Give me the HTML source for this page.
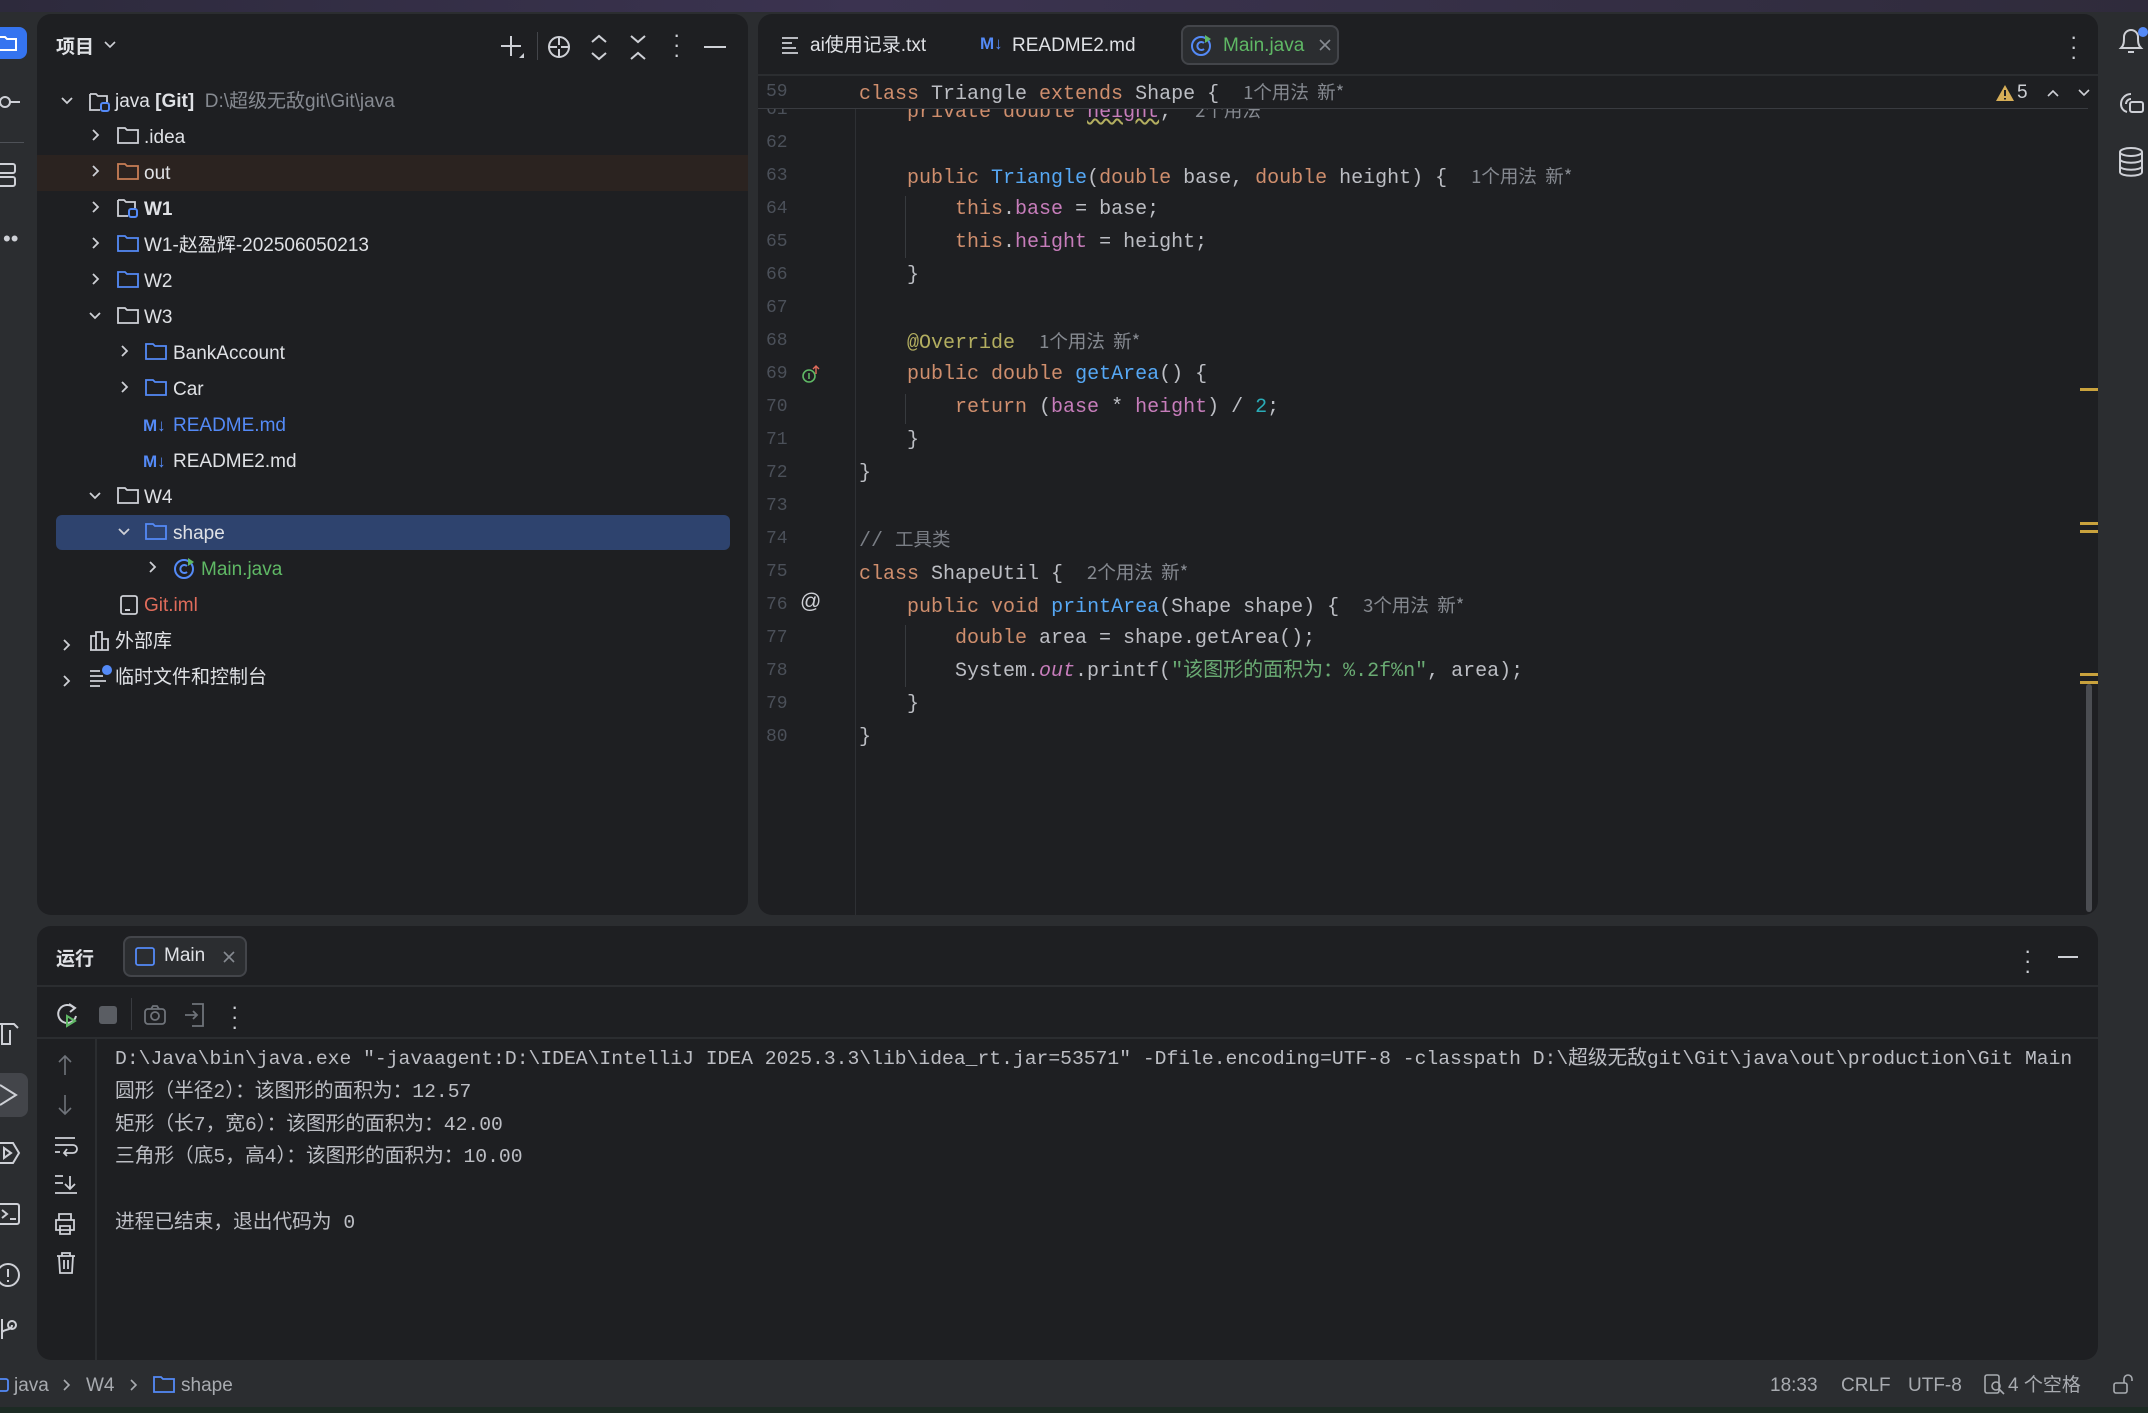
<!DOCTYPE html>
<html><head><meta charset="utf-8">
<style>
*{margin:0;padding:0;box-sizing:border-box}
body{width:2148px;height:1413px;background:#2b2d30;position:relative;overflow:hidden;font-family:"Liberation Sans","Noto Sans CJK SC",sans-serif;color:#dfe1e5}
.a{position:absolute;white-space:pre}
.panel{position:absolute;background:#1e1f22;border-radius:14px;overflow:hidden}
.t{position:absolute;font-size:19px;line-height:36px;height:36px;white-space:pre}
.mono{font-family:"Liberation Mono","Noto Sans CJK SC",monospace;font-size:19.7px}
.cl{position:absolute;left:0;height:33px;line-height:33px;white-space:pre;font-family:"Liberation Mono","Noto Sans CJK SC",monospace;font-size:20px;color:#bcbec4}
.ln{position:absolute;left:8px;width:30px;text-align:left;color:#4b5059;font-family:"Liberation Mono",monospace;font-size:18px;height:33px;line-height:33px}
.k{color:#cf8e6d}.f{color:#56a8f5}.v{color:#c77dbb}.n{color:#2aacb8}.s{color:#6aab73}.an{color:#b3ae60}.c{color:#7a7e85}
.h{color:#868a91;font-family:"Noto Sans CJK SC",sans-serif;font-size:18.5px}
svg{position:absolute;overflow:visible}
</style></head><body>
<div class="a" style="left:0;top:0;width:2148px;height:12px;background:linear-gradient(90deg,#2d2a3c,#3b3350 40%,#2f2b3b)"></div>
<div class="a" style="left:0;top:1407px;width:2148px;height:6px;background:#1d2b24"></div>

<div class="a" style="left:0;top:27px;width:27px;height:32px;background:#3574f0;border-radius:0 8px 8px 0"></div>
<svg style="left:0;top:34px" width="24" height="20"><path d="M-2 3h7l2 2h9v11h-18" fill="none" stroke="#fff" stroke-width="2"/></svg>
<svg style="left:0;top:92px" width="24" height="20"><circle cx="5" cy="10" r="5" fill="none" stroke="#ced0d6" stroke-width="2"/><path d="M10 10h10" stroke="#ced0d6" stroke-width="2"/></svg>
<div class="a" style="left:0;top:142px;width:24px;height:1px;background:#4e5157"></div>
<svg style="left:0;top:163px" width="20" height="26"><rect x="-3" y="1" width="18" height="9" rx="2" fill="none" stroke="#ced0d6" stroke-width="2"/><rect x="-3" y="14" width="18" height="9" rx="2" fill="none" stroke="#ced0d6" stroke-width="2"/></svg>
<div class="a" style="left:3px;top:226px;font-size:22px;color:#ced0d6">••</div>
<svg style="left:0;top:1020px" width="22" height="26"><path d="M-2 4h16l4 4M2 4v20h8v-14" fill="none" stroke="#ced0d6" stroke-width="2"/></svg>
<div class="a" style="left:0;top:1073px;width:28px;height:44px;background:#43454a;border-radius:0 8px 8px 0"></div>
<svg style="left:0;top:1083px" width="22" height="24"><path d="M0 2l16 10-16 10" fill="none" stroke="#ced0d6" stroke-width="2"/></svg>
<svg style="left:0;top:1141px" width="22" height="24"><path d="M-3 2h16l6 10-6 10h-16zM4 7l7 5-7 5z" fill="none" stroke="#ced0d6" stroke-width="2"/></svg>
<svg style="left:0;top:1202px" width="22" height="24"><rect x="-3" y="2" width="22" height="20" rx="2" fill="none" stroke="#ced0d6" stroke-width="2"/><path d="M2 8l5 4-5 4M10 17h6" fill="none" stroke="#ced0d6" stroke-width="2"/></svg>
<svg style="left:0;top:1262px" width="22" height="26"><circle cx="8" cy="13" r="11" fill="none" stroke="#ced0d6" stroke-width="2"/><path d="M8 7v8M8 18v2" stroke="#ced0d6" stroke-width="2"/></svg>
<svg style="left:0;top:1317px" width="22" height="26"><circle cx="12" cy="8" r="4" fill="none" stroke="#ced0d6" stroke-width="2"/><path d="M2 2v20M2 16c0-4 10-2 10-8" fill="none" stroke="#ced0d6" stroke-width="2"/></svg>

<svg style="left:2117px;top:26px" width="30" height="32"><path d="M4 22c3-3 3-6 3-11a7 7 0 0 1 14 0c0 5 0 8 3 11z M11 26h6" fill="none" stroke="#ced0d6" stroke-width="2"/><circle cx="26" cy="6" r="5" fill="#548af7"/></svg>
<svg style="left:2117px;top:90px" width="30" height="28"><path d="M14 4a10 10 0 0 0-10 10 8 8 0 0 0 6 8M14 9a5 5 0 0 0-5 5" fill="none" stroke="#ced0d6" stroke-width="2"/><rect x="13" y="12" width="13" height="10" rx="2" fill="none" stroke="#ced0d6" stroke-width="2"/></svg>
<svg style="left:2118px;top:147px" width="28" height="30"><ellipse cx="13" cy="5" rx="11" ry="4" fill="none" stroke="#ced0d6" stroke-width="2"/><path d="M2 5v20c0 5 22 5 22 0V5M2 12c0 5 22 5 22 0M2 19c0 5 22 5 22 0" fill="none" stroke="#ced0d6" stroke-width="2"/></svg>

<div class="panel" style="left:37px;top:14px;width:711px;height:901px">
  <div class="a" style="left:19px;top:18px;font-size:19px;font-weight:bold;color:#dfe1e5">项目</div>
  <svg style="left:66px;top:26px" width="14" height="10"><path d="M2 2l5 5 5-5" fill="none" stroke="#ced0d6" stroke-width="1.6"/></svg>
  <svg style="left:463px;top:20px" width="26" height="26"><path d="M11 2v20M1 12h20" stroke="#ced0d6" stroke-width="2"/><path d="M19 24l5-5v5z" fill="#ced0d6"/></svg>
  <div class="a" style="left:500px;top:18px;width:1px;height:28px;background:#43454a"></div>
  <svg style="left:510px;top:21px" width="26" height="26"><circle cx="12" cy="12" r="10" fill="none" stroke="#ced0d6" stroke-width="2"/><path d="M12 2v8M12 14v8M2 12h8M14 12h8" stroke="#ced0d6" stroke-width="2"/></svg>
  <svg style="left:552px;top:20px" width="20" height="28"><path d="M3 8l7-6 7 6M3 19l7 6 7-6" fill="none" stroke="#ced0d6" stroke-width="2"/></svg>
  <svg style="left:591px;top:20px" width="20" height="28"><path d="M3 2l7 6 7-6M3 25l7-6 7 6" fill="none" stroke="#ced0d6" stroke-width="2"/></svg>
  <div class="a" style="left:636px;top:16px;font-size:22px;color:#ced0d6;line-height:10px;width:6px;text-align:center">·<br>·<br>·</div>
  <div class="a" style="left:667px;top:32px;width:22px;height:2px;background:#ced0d6"></div>

  <div class="a" style="left:0;top:141px;width:711px;height:36px;background:#2b2320"></div>
  <div class="a" style="left:19px;top:501px;width:674px;height:35px;background:#2e436e;border-radius:6px"></div>

  <svg style="left:23px;top:80px" width="14" height="14"><path d="M2 4l5 5 5-5" fill="none" stroke="#ced0d6" stroke-width="1.8"/></svg>
  <svg style="left:52px;top:114px" width="14" height="14"><path d="M4 2l5 5-5 5" fill="none" stroke="#ced0d6" stroke-width="1.8"/></svg>
  <svg style="left:52px;top:150px" width="14" height="14"><path d="M4 2l5 5-5 5" fill="none" stroke="#ced0d6" stroke-width="1.8"/></svg>
  <svg style="left:52px;top:186px" width="14" height="14"><path d="M4 2l5 5-5 5" fill="none" stroke="#ced0d6" stroke-width="1.8"/></svg>
  <svg style="left:52px;top:222px" width="14" height="14"><path d="M4 2l5 5-5 5" fill="none" stroke="#ced0d6" stroke-width="1.8"/></svg>
  <svg style="left:52px;top:258px" width="14" height="14"><path d="M4 2l5 5-5 5" fill="none" stroke="#ced0d6" stroke-width="1.8"/></svg>
  <svg style="left:51px;top:295px" width="14" height="14"><path d="M2 4l5 5 5-5" fill="none" stroke="#ced0d6" stroke-width="1.8"/></svg>
  <svg style="left:81px;top:330px" width="14" height="14"><path d="M4 2l5 5-5 5" fill="none" stroke="#ced0d6" stroke-width="1.8"/></svg>
  <svg style="left:81px;top:366px" width="14" height="14"><path d="M4 2l5 5-5 5" fill="none" stroke="#ced0d6" stroke-width="1.8"/></svg>
  <svg style="left:51px;top:475px" width="14" height="14"><path d="M2 4l5 5 5-5" fill="none" stroke="#ced0d6" stroke-width="1.8"/></svg>
  <svg style="left:80px;top:511px" width="14" height="14"><path d="M2 4l5 5 5-5" fill="none" stroke="#ced0d6" stroke-width="1.8"/></svg>
  <svg style="left:109px;top:546px" width="14" height="14"><path d="M4 2l5 5-5 5" fill="none" stroke="#ced0d6" stroke-width="1.8"/></svg>
  <svg style="left:23px;top:624px" width="14" height="14"><path d="M4 2l5 5-5 5" fill="none" stroke="#ced0d6" stroke-width="1.8"/></svg>
  <svg style="left:23px;top:660px" width="14" height="14"><path d="M4 2l5 5-5 5" fill="none" stroke="#ced0d6" stroke-width="1.8"/></svg>

  <svg style="left:52px;top:78px" width="24" height="22"><path d="M1 2h6l2 2h9v6M1 2v16h10" fill="none" stroke="#ced0d6" stroke-width="1.8"/><rect x="12" y="11" width="8" height="8" rx="2" fill="none" stroke="#548af7" stroke-width="2"/></svg>
  <svg style="left:80px;top:112px" width="24" height="20"><path d="M1 2h7l2 2h11v13h-20z" fill="none" stroke="#ced0d6" stroke-width="1.8"/></svg>
  <svg style="left:80px;top:148px" width="24" height="20"><path d="M1 2h7l2 2h11v13h-20z" fill="none" stroke="#c77d55" stroke-width="1.8"/></svg>
  <svg style="left:80px;top:184px" width="24" height="22"><path d="M1 2h6l2 2h9v6M1 2v16h10" fill="none" stroke="#ced0d6" stroke-width="1.8"/><rect x="12" y="11" width="8" height="8" rx="2" fill="none" stroke="#548af7" stroke-width="2"/></svg>
  <svg style="left:80px;top:220px" width="24" height="20"><path d="M1 2h7l2 2h11v13h-20z" fill="none" stroke="#548af7" stroke-width="1.8"/></svg>
  <svg style="left:80px;top:256px" width="24" height="20"><path d="M1 2h7l2 2h11v13h-20z" fill="none" stroke="#548af7" stroke-width="1.8"/></svg>
  <svg style="left:80px;top:292px" width="24" height="20"><path d="M1 2h7l2 2h11v13h-20z" fill="none" stroke="#ced0d6" stroke-width="1.8"/></svg>
  <svg style="left:108px;top:328px" width="24" height="20"><path d="M1 2h7l2 2h11v13h-20z" fill="none" stroke="#548af7" stroke-width="1.8"/></svg>
  <svg style="left:108px;top:364px" width="24" height="20"><path d="M1 2h7l2 2h11v13h-20z" fill="none" stroke="#548af7" stroke-width="1.8"/></svg>
  <div class="a" style="left:106px;top:402px;font-size:17px;font-weight:bold;color:#548af7">M↓</div>
  <div class="a" style="left:106px;top:438px;font-size:17px;font-weight:bold;color:#548af7">M↓</div>
  <svg style="left:80px;top:472px" width="24" height="20"><path d="M1 2h7l2 2h11v13h-20z" fill="none" stroke="#ced0d6" stroke-width="1.8"/></svg>
  <svg style="left:108px;top:508px" width="24" height="20"><path d="M1 2h7l2 2h11v13h-20z" fill="none" stroke="#548af7" stroke-width="1.8"/></svg>
  <svg style="left:136px;top:543px" width="24" height="24"><circle cx="11" cy="12" r="9" fill="none" stroke="#548af7" stroke-width="2"/><path d="M14 9a4 4 0 1 0 0 6" fill="none" stroke="#548af7" stroke-width="2"/><path d="M15 1l6 4-6 4z" fill="#5fb865"/></svg>
  <svg style="left:82px;top:580px" width="22" height="22"><rect x="2" y="2" width="16" height="18" rx="2" fill="none" stroke="#ced0d6" stroke-width="1.8"/><path d="M6 16h5" stroke="#ced0d6" stroke-width="2"/></svg>
  <svg style="left:52px;top:616px" width="24" height="22"><path d="M2 20V6h5v14M7 20V2h6v18M13 20V9h6v11H1" fill="none" stroke="#ced0d6" stroke-width="1.8"/></svg>
  <svg style="left:52px;top:651px" width="26" height="22"><path d="M1 6h10M1 11h13M1 16h16M1 21h10" stroke="#ced0d6" stroke-width="1.8"/><circle cx="18" cy="5" r="5" fill="#548af7"/></svg>

  <div class="t" style="left:78px;top:70px"><span style="color:#dfe1e5">java </span><b>[Git]</b><span style="color:#868a91">  D:\超级无敌git\Git\java</span></div>
  <div class="t" style="left:107px;top:106px">.idea</div>
  <div class="t" style="left:107px;top:142px">out</div>
  <div class="t" style="left:107px;top:178px;font-weight:bold">W1</div>
  <div class="t" style="left:107px;top:214px">W1-赵盈辉-202506050213</div>
  <div class="t" style="left:107px;top:250px">W2</div>
  <div class="t" style="left:107px;top:286px">W3</div>
  <div class="t" style="left:136px;top:322px">BankAccount</div>
  <div class="t" style="left:136px;top:358px">Car</div>
  <div class="t" style="left:136px;top:394px;color:#548af7">README.md</div>
  <div class="t" style="left:136px;top:430px">README2.md</div>
  <div class="t" style="left:107px;top:466px">W4</div>
  <div class="t" style="left:136px;top:502px">shape</div>
  <div class="t" style="left:164px;top:538px;color:#5fb865">Main.java</div>
  <div class="t" style="left:107px;top:574px;color:#e06c5b">Git.iml</div>
  <div class="t" style="left:78px;top:610px">外部库</div>
  <div class="t" style="left:78px;top:646px">临时文件和控制台</div>
</div>

<div class="panel" style="left:758px;top:14px;width:1340px;height:901px">
  <svg style="left:23px;top:22px" width="20" height="18"><path d="M1 2h16M1 7h10M1 12h14M1 17h16" stroke="#ced0d6" stroke-width="1.8"/></svg>
  <div class="a" style="left:52px;top:19px;font-size:19px;line-height:26px;color:#dfe1e5">ai使用记录.txt</div>
  <div class="a" style="left:222px;top:20px;font-size:17px;font-weight:bold;color:#548af7">M↓</div>
  <div class="a" style="left:254px;top:19px;font-size:19px;line-height:26px;color:#dfe1e5">README2.md</div>
  <div class="a" style="left:423px;top:11px;width:158px;height:40px;border:2px solid #43454a;background:#2b2d30;border-radius:8px"></div>
  <svg style="left:432px;top:19px" width="24" height="26"><circle cx="11" cy="13" r="9" fill="none" stroke="#548af7" stroke-width="2"/><path d="M14 10a4 4 0 1 0 0 6" fill="none" stroke="#548af7" stroke-width="2"/><path d="M15 2l6 4-6 4z" fill="#5fb865"/></svg>
  <div class="a" style="left:465px;top:19px;font-size:19px;line-height:26px;color:#5fb865">Main.java</div>
  <svg style="left:560px;top:24px" width="14" height="14"><path d="M2 2l10 10M12 2L2 12" stroke="#868a91" stroke-width="1.6"/></svg>
  <div class="a" style="left:1312px;top:18px;font-size:22px;color:#ced0d6;line-height:10px;width:6px;text-align:center">·<br>·<br>·</div>
  <div class="a" style="left:0;top:60px;width:1340px;height:2px;background:#2b2d30"></div>

  <div class="a" style="left:97px;top:62px;width:1px;height:839px;background:#2e3034"></div>
  <div class="a" style="left:147px;top:182px;width:1px;height:62px;background:#373a3e"></div>
  <div class="a" style="left:147px;top:380px;width:1px;height:30px;background:#373a3e"></div>
  <div class="a" style="left:147px;top:611px;width:1px;height:62px;background:#373a3e"></div>

  <div class="ln" style="top:80px">61</div><div class="cl" style="left:101px;top:80px">    <span class="k">private double</span> <span class="v" style="text-decoration:underline wavy #b3ae60">height</span>;  <span class="h">2个用法</span></div>
  <div class="ln" style="top:113px">62</div>
  <div class="ln" style="top:146px">63</div><div class="cl" style="left:101px;top:146px">    <span class="k">public</span> <span class="f">Triangle</span>(<span class="k">double</span> base, <span class="k">double</span> height) {  <span class="h">1个用法  新*</span></div>
  <div class="ln" style="top:179px">64</div><div class="cl" style="left:101px;top:179px">        <span class="k">this</span>.<span class="v">base</span> = base;</div>
  <div class="ln" style="top:212px">65</div><div class="cl" style="left:101px;top:212px">        <span class="k">this</span>.<span class="v">height</span> = height;</div>
  <div class="ln" style="top:245px">66</div><div class="cl" style="left:101px;top:245px">    }</div>
  <div class="ln" style="top:278px">67</div>
  <div class="ln" style="top:311px">68</div><div class="cl" style="left:101px;top:311px">    <span class="an">@Override</span>  <span class="h">1个用法  新*</span></div>
  <div class="ln" style="top:344px">69</div><div class="cl" style="left:101px;top:344px">    <span class="k">public double</span> <span class="f">getArea</span>() {</div>
  <svg style="left:43px;top:350px" width="20" height="22"><circle cx="8" cy="12" r="6" fill="none" stroke="#5fb865" stroke-width="1.6"/><path d="M8 9v6" stroke="#5fb865" stroke-width="1.6"/><path d="M15 2v8M12 5l3-3 3 3" fill="none" stroke="#e06c5b" stroke-width="1.4"/></svg>
  <div class="ln" style="top:377px">70</div><div class="cl" style="left:101px;top:377px">        <span class="k">return</span> (<span class="v">base</span> * <span class="v">height</span>) / <span class="n">2</span>;</div>
  <div class="ln" style="top:410px">71</div><div class="cl" style="left:101px;top:410px">    }</div>
  <div class="ln" style="top:443px">72</div><div class="cl" style="left:101px;top:443px">}</div>
  <div class="ln" style="top:476px">73</div>
  <div class="ln" style="top:509px">74</div><div class="cl" style="left:101px;top:509px"><span class="c">// </span><span class="c" style="font-family:'Noto Sans CJK SC',sans-serif;font-size:18.5px">工具类</span></div>
  <div class="ln" style="top:542px">75</div><div class="cl" style="left:101px;top:542px"><span class="k">class</span> ShapeUtil {  <span class="h">2个用法  新*</span></div>
  <div class="ln" style="top:575px">76</div><div class="cl" style="left:101px;top:575px">    <span class="k">public void</span> <span class="f">printArea</span>(Shape shape) {  <span class="h">3个用法  新*</span></div>
  <div class="a" style="left:42px;top:576px;font-size:21px;color:#ced0d6">@</div>
  <div class="ln" style="top:608px">77</div><div class="cl" style="left:101px;top:608px">        <span class="k">double</span> area = shape.getArea();</div>
  <div class="ln" style="top:641px">78</div><div class="cl" style="left:101px;top:641px">        System.<span class="v" style="font-style:italic">out</span>.printf(<span class="s">"该图形的面积为：%.2f%n"</span>, area);</div>
  <div class="ln" style="top:674px">79</div><div class="cl" style="left:101px;top:674px">    }</div>
  <div class="ln" style="top:707px">80</div><div class="cl" style="left:101px;top:707px">}</div>

  <div class="a" style="left:0;top:62px;width:1330px;height:33px;background:#1e1f22;border-bottom:1px solid #393b40"></div>
  <div class="ln" style="top:62px">59</div><div class="cl" style="left:101px;top:62px"><span class="k">class</span> Triangle <span class="k">extends</span> Shape {  <span class="h">1个用法  新*</span></div>
  <svg style="left:1237px;top:70px" width="20" height="18"><path d="M10 1L19 17H1z" fill="#d6ae58"/><path d="M10 6v6M10 14v1.5" stroke="#1e1f22" stroke-width="2"/></svg>
  <div class="a" style="left:1259px;top:68px;font-size:19px;color:#ced0d6">5</div>
  <svg style="left:1288px;top:74px" width="14" height="10"><path d="M2 8l5-5 5 5" fill="none" stroke="#ced0d6" stroke-width="1.6"/></svg>
  <svg style="left:1319px;top:74px" width="14" height="10"><path d="M2 2l5 5 5-5" fill="none" stroke="#ced0d6" stroke-width="1.6"/></svg>

  <div class="a" style="left:1322px;top:374px;width:18px;height:3px;background:#c9a23d"></div>
  <div class="a" style="left:1322px;top:508px;width:18px;height:3px;background:#c9a23d"></div>
  <div class="a" style="left:1322px;top:516px;width:18px;height:3px;background:#c9a23d"></div>
  <div class="a" style="left:1322px;top:659px;width:18px;height:3px;background:#c9a23d"></div>
  <div class="a" style="left:1322px;top:667px;width:18px;height:3px;background:#c9a23d"></div>
  <div class="a" style="left:1328px;top:670px;width:6px;height:228px;background:#4b4d52;border-radius:3px"></div>
</div>

<div class="panel" style="left:37px;top:926px;width:2061px;height:434px">
  <div class="a" style="left:19px;top:18px;font-size:19px;font-weight:bold;color:#dfe1e5">运行</div>
  <div class="a" style="left:86px;top:10px;width:124px;height:41px;border:2px solid #43454a;background:#2b2d30;border-radius:8px"></div>
  <svg style="left:98px;top:21px" width="22" height="20"><rect x="1" y="1" width="18" height="17" rx="2" fill="none" stroke="#548af7" stroke-width="1.8"/></svg>
  <div class="a" style="left:127px;top:19px;font-size:19px;color:#dfe1e5">Main</div>
  <svg style="left:185px;top:24px" width="14" height="14"><path d="M2 2l10 10M12 2L2 12" stroke="#868a91" stroke-width="1.6"/></svg>
  <div class="a" style="left:1987px;top:20px;font-size:22px;color:#ced0d6;line-height:10px;width:6px;text-align:center">·<br>·<br>·</div>
  <div class="a" style="left:2021px;top:30px;width:20px;height:2px;background:#ced0d6"></div>
  <div class="a" style="left:0;top:59px;width:2061px;height:2px;background:#2b2d30"></div>
  <svg style="left:18px;top:76px" width="28" height="28"><path d="M19 6a9 9 0 1 0 2 8" fill="none" stroke="#ced0d6" stroke-width="2"/><path d="M14 2l6 4-5 4" fill="none" stroke="#ced0d6" stroke-width="2"/><path d="M12 14l8 5-8 5z" fill="none" stroke="#5fb865" stroke-width="2"/></svg>
  <div class="a" style="left:62px;top:80px;width:18px;height:18px;background:#5a5d63;border-radius:3px"></div>
  <div class="a" style="left:94px;top:72px;width:1px;height:32px;background:#393b40"></div>
  <svg style="left:107px;top:78px" width="24" height="22"><rect x="1" y="5" width="20" height="15" rx="3" fill="none" stroke="#6f737a" stroke-width="1.8"/><circle cx="11" cy="12" r="4" fill="none" stroke="#6f737a" stroke-width="1.8"/><path d="M7 5l2-3h4l2 3" fill="none" stroke="#6f737a" stroke-width="1.8"/></svg>
  <svg style="left:147px;top:76px" width="22" height="26"><path d="M8 2h11v22H8M1 13h12M9 9l4 4-4 4" fill="none" stroke="#6f737a" stroke-width="1.8"/></svg>
  <div class="a" style="left:194px;top:76px;font-size:22px;color:#ced0d6;line-height:10px;width:6px;text-align:center">·<br>·<br>·</div>
  <div class="a" style="left:0;top:111px;width:2061px;height:2px;background:#2b2d30"></div>
  <div class="a" style="left:58px;top:113px;width:2px;height:321px;background:#2b2d30"></div>
  <svg style="left:20px;top:128px" width="16" height="22"><path d="M8 2v19M2 8l6-6 6 6" fill="none" stroke="#6f737a" stroke-width="1.6"/></svg>
  <svg style="left:20px;top:168px" width="16" height="22"><path d="M8 1v19M2 14l6 6 6-6" fill="none" stroke="#6f737a" stroke-width="1.6"/></svg>
  <svg style="left:17px;top:210px" width="24" height="20"><path d="M1 2h20M1 9h18a4 4 0 0 1 0 8h-8M1 16h5M13 13l-3 4 3 3" fill="none" stroke="#ced0d6" stroke-width="1.8"/></svg>
  <svg style="left:17px;top:248px" width="24" height="22"><path d="M1 2h8M1 9h8M1 19h22M16 2v13M11 10l5 5 5-5" fill="none" stroke="#ced0d6" stroke-width="1.8"/></svg>
  <svg style="left:17px;top:286px" width="24" height="24"><path d="M5 8V2h12v6M2 8h18v10h-18zM6 14h10v8h-10z" fill="none" stroke="#ced0d6" stroke-width="1.8"/></svg>
  <svg style="left:19px;top:325px" width="22" height="24"><path d="M1 5h18M6 5V2h8v3M3 5l1 17h12l1-17M8 9v9M12 9v9" fill="none" stroke="#ced0d6" stroke-width="1.8"/></svg>
  <div class="a mono" style="left:78px;top:118px;line-height:30px;color:#bcbec4">D:\Java\bin\java.exe "-javaagent:D:\IDEA\IntelliJ IDEA 2025.3.3\lib\idea_rt.jar=53571" -Dfile.encoding=UTF-8 -classpath D:\超级无敌git\Git\java\out\production\Git Main</div>
  <div class="a mono" style="left:78px;top:151px;line-height:30px;color:#bcbec4">圆形（半径2）：该图形的面积为：12.57</div>
  <div class="a mono" style="left:78px;top:184px;line-height:30px;color:#bcbec4">矩形（长7，宽6）：该图形的面积为：42.00</div>
  <div class="a mono" style="left:78px;top:216px;line-height:30px;color:#bcbec4">三角形（底5，高4）：该图形的面积为：10.00</div>
  <div class="a mono" style="left:78px;top:282px;line-height:30px;color:#bcbec4">进程已结束，退出代码为 0</div>
</div>

<svg style="left:0;top:1377px" width="12" height="16"><rect x="-4" y="2" width="12" height="12" rx="2" fill="none" stroke="#548af7" stroke-width="1.8"/></svg>
<div class="a" style="left:14px;top:1373px;font-size:19px;line-height:26px;color:#a8abb0">java</div>
<svg style="left:62px;top:1378px" width="10" height="14"><path d="M2 2l5 5-5 5" fill="none" stroke="#a8abb0" stroke-width="1.6"/></svg>
<div class="a" style="left:86px;top:1373px;font-size:19px;line-height:26px;color:#a8abb0">W4</div>
<svg style="left:129px;top:1378px" width="10" height="14"><path d="M2 2l5 5-5 5" fill="none" stroke="#a8abb0" stroke-width="1.6"/></svg>
<svg style="left:153px;top:1375px" width="24" height="20"><path d="M1 2h7l2 2h11v13h-20z" fill="none" stroke="#548af7" stroke-width="1.8"/></svg>
<div class="a" style="left:181px;top:1373px;font-size:19px;line-height:26px;color:#a8abb0">shape</div>
<div class="a" style="left:1770px;top:1373px;font-size:19px;line-height:26px;color:#a8abb0">18:33</div>
<div class="a" style="left:1841px;top:1373px;font-size:19px;line-height:26px;color:#a8abb0">CRLF</div>
<div class="a" style="left:1908px;top:1373px;font-size:19px;line-height:26px;color:#a8abb0">UTF-8</div>
<svg style="left:1984px;top:1374px" width="22" height="22"><rect x="1" y="1" width="14" height="18" rx="2" fill="none" stroke="#a8abb0" stroke-width="1.6"/><circle cx="12" cy="12" r="4" fill="none" stroke="#a8abb0" stroke-width="1.6"/><path d="M15 15l5 5" stroke="#a8abb0" stroke-width="1.6"/></svg>
<div class="a" style="left:2008px;top:1373px;font-size:19px;line-height:26px;color:#a8abb0">4 个空格</div>
<svg style="left:2112px;top:1373px" width="24" height="22"><rect x="2" y="10" width="13" height="10" rx="2" fill="none" stroke="#a8abb0" stroke-width="1.6"/><path d="M12 10V6a4 4 0 0 1 8 0v2" fill="none" stroke="#a8abb0" stroke-width="1.6"/></svg>
</body></html>
